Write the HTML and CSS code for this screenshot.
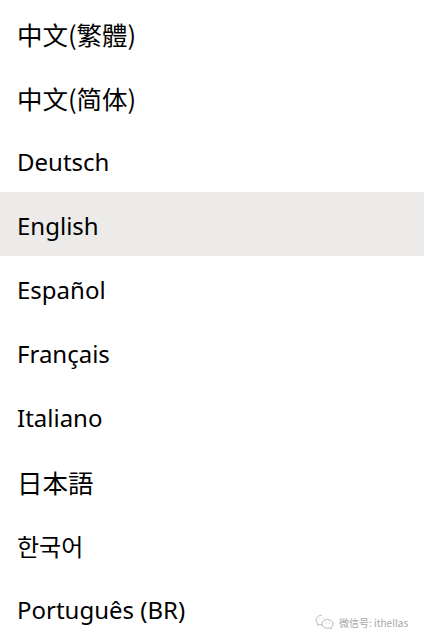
FILE: index.html
```html
<!DOCTYPE html>
<html>
<head>
<meta charset="utf-8">
<link rel="stylesheet" href="styles.css">
</head>
<body>
<ul class="lang-list">
  <li class="lang-item cjk-tc">中文(繁體)</li>
  <li class="lang-item cjk-sc">中文(简体)</li>
  <li class="lang-item">Deutsch</li>
  <li class="lang-item selected">English</li>
  <li class="lang-item">Español</li>
  <li class="lang-item">Français</li>
  <li class="lang-item">Italiano</li>
  <li class="lang-item cjk-jp">日本語</li>
  <li class="lang-item cjk-kr">한국어</li>
  <li class="lang-item">Português (BR)</li>
</ul>
<div class="watermark">
  <svg class="wm-icon" width="19" height="16" viewBox="0 0 19 16" fill="none" stroke="#b8b8b8" stroke-width="1">
    <path d="M7 1.2C3.7 1.2 1 3.4 1 6.1c0 1.5.8 2.8 2.1 3.7l-.5 1.6 1.9-1c.8.3 1.6.4 2.5.4"/>
    <path d="M12.5 5.5c-3.1 0-5.6 2-5.6 4.4s2.5 4.4 5.6 4.4c.7 0 1.4-.1 2-.3l1.7.9-.4-1.4c1.4-.8 2.300-2.1 2.3-3.6 0-2.4-2.5-4.4-5.6-4.4z"/>
    <circle cx="4.8" cy="4.6" r=".5" fill="#b8b8b8" stroke="none"/>
    <circle cx="8.6" cy="4.6" r=".5" fill="#b8b8b8" stroke="none"/>
    <circle cx="10.7" cy="9" r=".5" fill="#b8b8b8" stroke="none"/>
    <circle cx="14.3" cy="9" r=".5" fill="#b8b8b8" stroke="none"/>
  </svg>
  <span class="wm-text">微信号: ithellas</span>
</div>
</body>
</html>
```
FILE: styles.css
```css
html, body {
  margin: 0;
  padding: 0;
  background: #ffffff;
}
body {
  width: 424px;
  height: 640px;
  overflow: hidden;
  position: relative;
  font-family: "Noto Sans", "Noto Sans CJK SC", sans-serif;
}
.lang-list {
  list-style: none;
  margin: 0;
  padding: 0;
}
.lang-item {
  height: 64px;
  display: flex;
  align-items: center;
  padding-left: 17px;
  padding-top: 2px;
  box-sizing: border-box;
  font-size: 24px;
  color: #000000;
  font-family: "Noto Sans", "Noto Sans CJK SC", sans-serif;
}
.cjk-tc {
  font-family: "Noto Sans CJK TC", sans-serif;
  font-size: 25.5px;
}
.cjk-sc {
  font-family: "Noto Sans CJK SC", sans-serif;
  font-size: 25.5px;
}
.cjk-jp {
  font-family: "Noto Sans CJK JP", sans-serif;
  font-size: 25.5px;
}
.cjk-kr {
  font-family: "Noto Sans CJK KR", sans-serif;
  font-size: 24px;
}
.lang-item.selected {
  background: #ecebea;
}
.watermark {
  position: absolute;
  left: 315px;
  top: 614px;
  display: flex;
  align-items: center;
  gap: 5px;
}
.wm-text {
  font-family: "Noto Sans CJK SC", sans-serif;
  font-size: 10px;
  color: #a8a8a8;
}
```
